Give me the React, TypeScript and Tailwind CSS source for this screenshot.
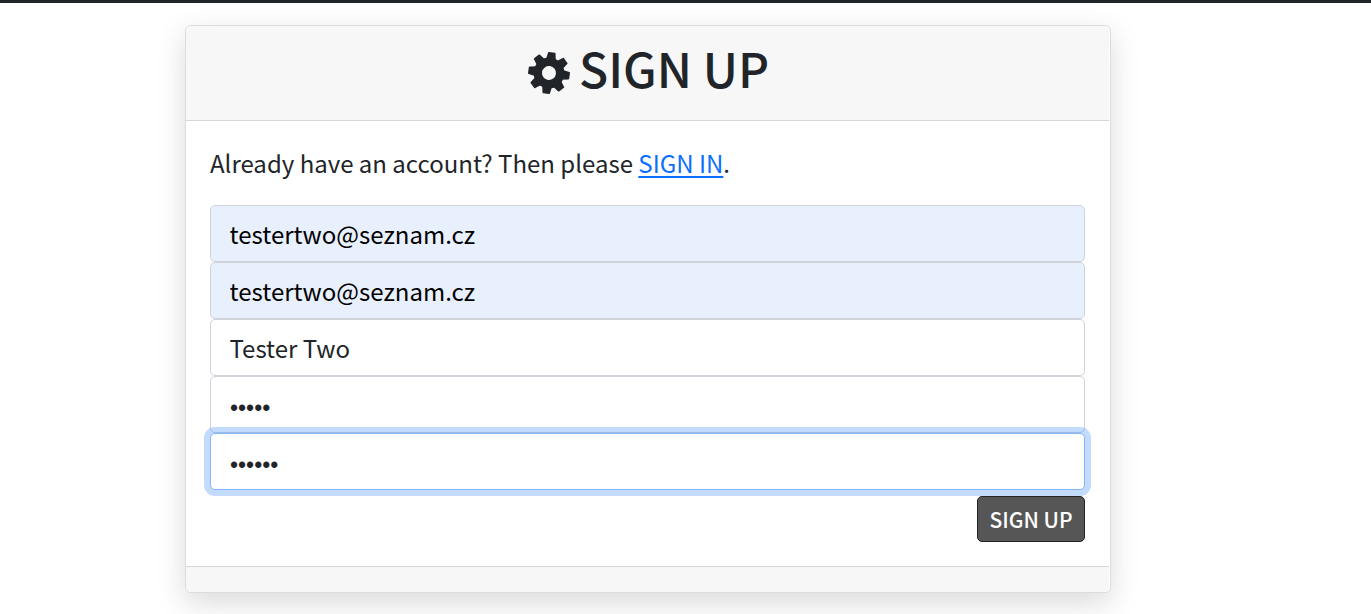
const fieldBase =
  "block h-[57px] w-full rounded-[5px] border outline-none";

function Gear() {
  const teeth = [0, 45, 90, 135, 180, 225, 270, 315];
  return (
    <svg className="-mt-px h-[42px] w-[42px]" viewBox="-21 -21 42 42" fill="#212529" aria-hidden="true">
      <g transform="rotate(8)">
        {teeth.map((angle) => (
          <path key={angle} d="M-5.2 -12L-3.8 -20Q-3.7 -20.8 -3 -20.8H3Q3.7 -20.8 3.8 -20L5.2 -12Z" transform={`rotate(${angle})`} />
        ))}
        <circle r="11.2" fill="none" stroke="#212529" strokeWidth="8.4" />
      </g>
    </svg>
  );
}

export default function App() {
  return (
    <div className="h-[614px] overflow-hidden bg-white font-['Noto_Sans_CJK_SC',sans-serif] text-[#212529]">
      <div className="h-[3px] bg-[#212529]" />
      <main className="mt-[22px] ml-[185px] flex h-[568px] w-[926px] flex-col rounded-[6px] border border-[#dcdcdc] bg-white shadow-[0_10px_30px_rgba(0,0,0,0.15)]">
        <header className="mr-px flex h-[95px] shrink-0 items-center justify-center gap-[9px] rounded-t-[5px] border-b border-[#d6d6d6] bg-[#f7f7f7] pl-[2px]">
          <Gear />
          <h1 className="-mt-[13px] text-[48px] font-medium leading-none">SIGN UP</h1>
        </header>
        <form className="flex grow flex-col pr-[25px] pl-6">
          <p className="mt-[23px] mb-[24px] h-[37px] text-[24px] leading-[37px] whitespace-nowrap">
            Already have an account? Then please{" "}
            <a href="#" className="text-[#0d6efd] underline decoration-2 underline-offset-[3px]">SIGN IN</a>.
          </p>
          <input aria-label="Email" readOnly className={`${fieldBase} border-[#ced4da] bg-[#e8f0fe] px-[18.5px] pb-px text-[24px] text-black`} defaultValue="testertwo@seznam.cz" />
          <input aria-label="Username" readOnly className={`${fieldBase} border-[#ced4da] bg-[#e8f0fe] px-[18.5px] pb-px text-[24px] text-black`} defaultValue="testertwo@seznam.cz" />
          <input aria-label="Name" readOnly className={`${fieldBase} border-[#ced4da] bg-white px-[18.5px] pb-px text-[24px]`} defaultValue="Tester Two" />
          <input aria-label="Password" type="password" readOnly className={`${fieldBase} border-[#ced4da] bg-white px-[19px] pt-[7px] font-['Liberation_Sans',sans-serif] text-[23px]`} defaultValue="apple" />
          <input aria-label="Repeat password" type="password" readOnly className={`${fieldBase} border-[#86b7fe] bg-white px-[19px] pt-[7px] font-['Liberation_Sans',sans-serif] text-[23px] shadow-[0_0_0_6px_rgba(13,110,253,0.25)]`} defaultValue="apples" />
          <button type="button" className="mt-[6px] h-[46px] w-[108px] self-end rounded-[5px] border border-[#212529] bg-[#565656] pt-px text-[21px] font-medium leading-none whitespace-nowrap text-white">
            SIGN UP
          </button>
        </form>
        <footer className="mr-px h-[26px] shrink-0 rounded-b-[5px] border-t border-[#d6d6d6] bg-[#f7f7f7]" />
      </main>
    </div>
  );
}
